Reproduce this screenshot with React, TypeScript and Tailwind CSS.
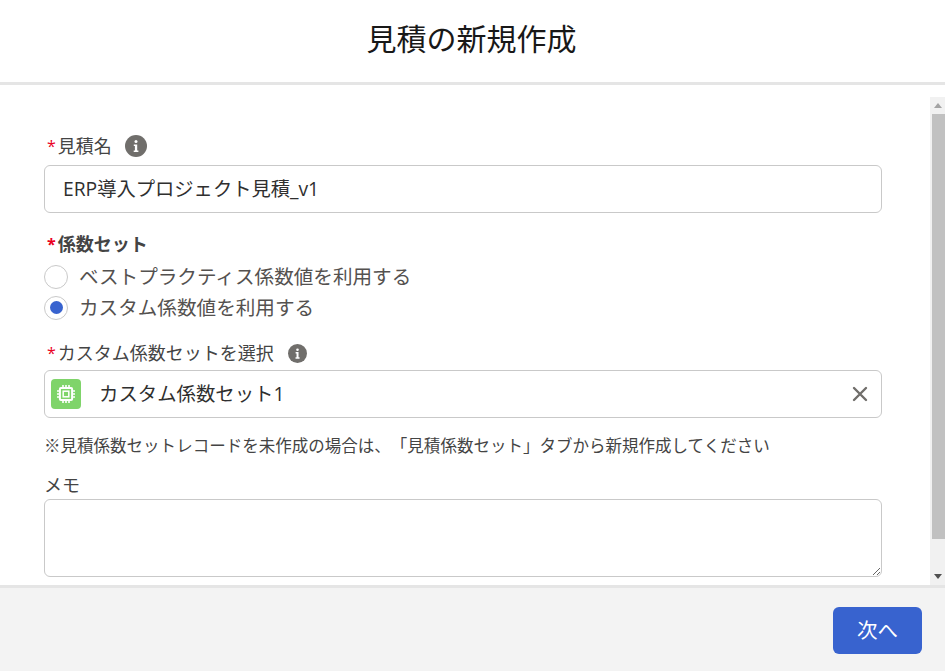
const FONT = "font-['Open_Sans','Noto_Sans_CJK_JP',sans-serif]";

function InfoIcon({ size }: { size: number }) {
  return (
    <svg width={size} height={size} viewBox="0 0 22 22" className="shrink-0">
      <circle cx="11" cy="11" r="11" fill="#706e6b" />
      <circle cx="11" cy="6.6" r="1.5" fill="#fff" />
      <path d="M8.8 9.4h3.4v6h1.2v1.6H8.7v-1.6h1.2v-4.3H8.8z" fill="#fff" />
    </svg>
  );
}

function Star({ bold }: { bold?: boolean }) {
  return <span className={`text-[#ea001e] ${bold ? "font-bold" : ""} text-[16px] leading-none mr-[2px]`}>*</span>;
}

function Radio({ checked, label }: { checked?: boolean; label: string }) {
  return (
    <div className="flex items-center h-[31px]">
      <span className="flex items-center justify-center w-[24px] h-[24px] rounded-full border border-[#c9c9c9] bg-white mr-[11px]">
        {checked && <span className="w-[13px] h-[13px] rounded-full bg-[#3863cf]" />}
      </span>
      <span className="text-[19.6px] text-[#54514f] leading-none">{label}</span>
    </div>
  );
}

function ChipIcon() {
  return (
    <span className="flex items-center justify-center w-[30px] h-[30px] rounded-[4px] bg-[#7fd46a] shrink-0">
      <svg width="20" height="20" viewBox="0 0 20 20" fill="none" stroke="#fff" strokeWidth="2">
        <rect x="3.9" y="3.9" width="12.2" height="12.2" rx="1" />
        <rect x="7.2" y="7.2" width="5.6" height="5.6" strokeWidth="1.5" />
        <path d="M7 1v3M10 1v3M13 1v3M7 16v3M10 16v3M13 16v3M1 7h3M1 10h3M1 13h3M16 7h3M16 10h3M16 13h3" strokeWidth="1.6" />
      </svg>
    </span>
  );
}

function Scrollbar() {
  return (
    <div className="w-[15px] mt-[12px] bg-[#f1f1f1] flex flex-col items-end shrink-0">
      <div className="w-full h-[17px] flex items-center justify-center">
        <svg width="8" height="5" viewBox="0 0 8 5"><path d="M4 0l4 5H0z" fill="#a3a3a3" /></svg>
      </div>
      <div className="w-[13px] h-[425px] bg-[#c1c1c1]" />
      <div className="flex-1" />
      <div className="w-full h-[17px] flex items-center justify-center">
        <svg width="8" height="5" viewBox="0 0 8 5"><path d="M4 5L8 0H0z" fill="#505050" /></svg>
      </div>
    </div>
  );
}

export default function App() {
  return (
    <div className={`${FONT} w-[945px] h-[671px] flex flex-col bg-white overflow-hidden`}>
      <header className="h-[85px] shrink-0 border-b-[3px] border-[#e5e5e5] flex items-center justify-center pb-[5px] pr-[2px]">
        <h1 className="text-[30px] font-normal text-[#181818] leading-none">見積の新規作成</h1>
      </header>

      <div className="flex h-[500px] shrink-0">
        <main className="flex-1 pl-[44px] pr-[48px] pt-[48px]">
          <div className="flex items-center h-[26px] pl-[3px] text-[18px] text-[#444]">
            <Star />
            <span className="leading-none">見積名</span>
            <span className="ml-[13px]"><InfoIcon size={22} /></span>
          </div>
          <div className="mt-[6px] h-[48px] rounded-[6px] border border-[#c9c9c9] flex items-center pl-[18px] text-[19.3px] text-[#2f2f2f]">
            ERP導入プロジェクト見積_v1
          </div>

          <div className="mt-[18px] flex items-center h-[26px] pl-[3px] text-[18px] text-[#444] font-bold">
            <Star bold />
            <span className="leading-none">係数セット</span>
          </div>
          <div className="mt-[4px] flex flex-col">
            <Radio label="ベストプラクティス係数値を利用する" />
            <Radio checked label="カスタム係数値を利用する" />
          </div>

          <div className="mt-[17px] flex items-center h-[26px] pl-[3px] text-[18px] text-[#444]">
            <Star />
            <span className="leading-none">カスタム係数セットを選択</span>
            <span className="ml-[14px]"><InfoIcon size={19} /></span>
          </div>
          <div className="mt-[4px] h-[48px] rounded-[6px] border border-[#c9c9c9] flex items-center pl-[6px] pr-[12px] text-[19.4px] text-[#2f2f2f]">
            <ChipIcon />
            <span className="ml-[18px] flex-1">カスタム係数セット1</span>
            <svg width="18" height="18" viewBox="0 0 18 18" stroke="#706e6b" strokeWidth="2.4" strokeLinecap="round">
              <path d="M3 3l12 12M15 3L3 15" />
            </svg>
          </div>
          <p className="mt-[15px] text-[16.52px] leading-[26px] text-[#444] whitespace-nowrap [text-spacing-trim:space-all]">
            ※見積係数セットレコードを未作成の場合は、「見積係数セット」タブから新規作成してください
          </p>

          <div className="mt-[13px] h-[26px] flex items-center text-[18px] text-[#444]">メモ</div>
          <textarea className="block mt-[1px] w-full h-[78px] rounded-[6px] border border-[#c9c9c9] outline-none" />
        </main>
        <Scrollbar />
      </div>

      <footer className="flex-1 border-t-[3px] border-[#e5e5e5] bg-[#f3f3f3] flex justify-end items-start pt-[19px] pr-[23px]">
        <button className="w-[89px] h-[47px] rounded-[6px] bg-[#3863cf] text-white text-[20.5px] leading-none">次へ</button>
      </footer>
    </div>
  );
}
